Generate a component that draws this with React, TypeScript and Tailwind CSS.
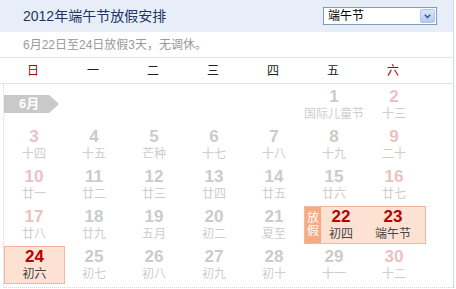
import * as React from 'react';

type Day = { d: number; lunar: string; tone: 'gray' | 'pink' | 'holiday' };

const weekDays = ['日', '一', '二', '三', '四', '五', '六'];

const rows: Day[][] = [
  [
    { d: 3, lunar: '十四', tone: 'pink' },
    { d: 4, lunar: '十五', tone: 'gray' },
    { d: 5, lunar: '芒种', tone: 'gray' },
    { d: 6, lunar: '十七', tone: 'gray' },
    { d: 7, lunar: '十八', tone: 'gray' },
    { d: 8, lunar: '十九', tone: 'gray' },
    { d: 9, lunar: '二十', tone: 'pink' },
  ],
  [
    { d: 10, lunar: '廿一', tone: 'pink' },
    { d: 11, lunar: '廿二', tone: 'gray' },
    { d: 12, lunar: '廿三', tone: 'gray' },
    { d: 13, lunar: '廿四', tone: 'gray' },
    { d: 14, lunar: '廿五', tone: 'gray' },
    { d: 15, lunar: '廿六', tone: 'gray' },
    { d: 16, lunar: '廿七', tone: 'pink' },
  ],
];

const lastRow: Day[] = [
  { d: 24, lunar: '初六', tone: 'holiday' },
  { d: 25, lunar: '初七', tone: 'gray' },
  { d: 26, lunar: '初八', tone: 'gray' },
  { d: 27, lunar: '初九', tone: 'gray' },
  { d: 28, lunar: '初十', tone: 'gray' },
  { d: 29, lunar: '十一', tone: 'gray' },
  { d: 30, lunar: '十二', tone: 'pink' },
];

const numColor = {
  gray: 'text-[#cbcbcb]',
  pink: 'text-[#e9c3c3]',
  holiday: 'text-[#b80000]',
};

const Cell: React.FC<{ day: Day }> = ({ day }) => {
  if (day.tone === 'holiday') {
    return (
      <div className="mt-[2px] h-[38px] w-[61px] pt-[1px] flex flex-col items-center border border-[#f3b79c] bg-[#fde2d4]">
        <span className={`text-[17px] leading-[17px] font-bold ${numColor.holiday}`}>{day.d}</span>
        <span className="mt-[1px] text-[12px] leading-[16px] text-[#444]">{day.lunar}</span>
      </div>
    );
  }
  return (
    <div className="h-[40px] pt-[4px] flex flex-col items-center">
      <span className={`text-[17px] leading-[17px] font-bold ${numColor[day.tone]}`}>{day.d}</span>
      <span className="mt-[1px] text-[12px] leading-[16px] text-[#cdcdcd]">{day.lunar}</span>
    </div>
  );
};

const App: React.FC = () => {
  return (
    <div className="w-[456px] h-[289px] bg-white overflow-hidden font-['Liberation_Sans','Noto_Sans_CJK_SC',sans-serif]">
      <div className="w-[454px] border-r border-[#cdd8e6]">
        {/* header */}
        <div className="h-[32px] bg-[#e7eef8] flex items-center justify-between pl-[23px] pr-[16px]">
          <span className="text-[14px] text-[#1d3563]">2012年端午节放假安排</span>
          <div className="w-[114px] h-[18px] bg-white border border-[#7f9db9] flex items-center justify-between pl-[4px] pr-[1px]">
            <span className="text-[12px] leading-[14px] text-black">端午节</span>
            <span className="w-[15px] h-[14px] rounded-[2px] bg-gradient-to-b from-[#dbe6fa] to-[#b6c9ee] border border-[#b3c6ea] flex items-center justify-center">
              <svg width="7" height="5" viewBox="0 0 7 5">
                <path d="M0.8 0.8 L3.5 3.5 L6.2 0.8" stroke="#3d5a9a" strokeWidth="1.6" fill="none" />
              </svg>
            </span>
          </div>
        </div>

        {/* subtitle */}
        <div className="h-[26px] border-b border-[#dfe4ea] flex items-center pl-[23px]">
          <span className="text-[12px] text-[#9a9a9a]">6月22日至24日放假3天，无调休。</span>
        </div>

        {/* weekdays */}
        <div className="h-[26px] border-b border-[#dfe4ea] pl-[3px] grid grid-cols-[repeat(7,60px)] items-center">
          {weekDays.map((w, i) => (
            <span key={w} className={`text-center text-[12px] ${i === 0 || i === 6 ? 'text-[#b30000]' : 'text-[#222]'}`}>
              {w}
            </span>
          ))}
        </div>

        {/* month body */}
        <div className="ml-[3px] border-l border-[#cfdae8] pb-[3px] border-b border-b-[#d4d4d4] border-dotted">
          <div className="grid grid-cols-[repeat(7,60px)] grid-rows-[repeat(5,40px)]">
            <div className="col-span-5 pt-[11px]">
              <div className="w-[55px] h-[18px] bg-[#c9c9c9] pl-[15px] flex items-center text-[13px] font-bold text-white [clip-path:polygon(0_0,82%_0,100%_50%,82%_100%,0_100%)]">
                6月
              </div>
            </div>
            <Cell day={{ d: 1, lunar: '国际儿童节', tone: 'gray' }} />
            <Cell day={{ d: 2, lunar: '十三', tone: 'pink' }} />

            {rows.map(r => r.map(day => <Cell key={day.d} day={day} />))}

            <Cell day={{ d: 17, lunar: '廿八', tone: 'pink' }} />
            <Cell day={{ d: 18, lunar: '廿九', tone: 'gray' }} />
            <Cell day={{ d: 19, lunar: '五月', tone: 'gray' }} />
            <Cell day={{ d: 20, lunar: '初二', tone: 'gray' }} />
            <Cell day={{ d: 21, lunar: '夏至', tone: 'gray' }} />
            <div className="col-span-2 mt-[2px] h-[38px] w-[122px] flex border border-[#f3b79c] bg-[#fde2d4]">
              <div className="w-[16px] bg-[#f6a985] flex flex-col items-center justify-center text-[12px] leading-[13px] text-white">
                <span>放</span>
                <span>假</span>
              </div>
              <div className="w-[40px] pt-[1px] flex flex-col items-center">
                <span className="text-[17px] leading-[17px] font-bold text-[#b80000]">22</span>
                <span className="mt-[1px] text-[12px] leading-[16px] text-[#444]">初四</span>
              </div>
              <div className="flex-1 pt-[1px] flex flex-col items-center">
                <span className="text-[17px] leading-[17px] font-bold text-[#b80000]">23</span>
                <span className="mt-[1px] text-[12px] leading-[16px] text-[#444]">端午节</span>
              </div>
            </div>

            {lastRow.map(day => <Cell key={day.d} day={day} />)}
          </div>
        </div>
      </div>
    </div>
  );
};

export default App;
